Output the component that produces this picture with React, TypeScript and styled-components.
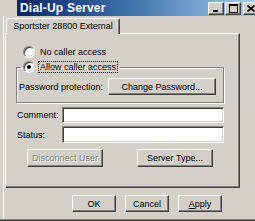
import React from "react";
import styled, { createGlobalStyle } from "styled-components";

const Global = createGlobalStyle`
  html, body { margin: 0; padding: 0; background: #d4d0c8; overflow: hidden; }
  * { box-sizing: border-box; }
`;

const FONT = `"Liberation Sans", Arial, sans-serif`;

const Window = styled.div`
  width: 255px;
  height: 221px;
  background: #d4d0c8;
  display: flex;
  flex-direction: column;
  overflow: hidden;
  font-family: ${FONT};
  font-size: 9px;
  color: #000;
  box-shadow: inset 0 -1px 0 #404040, inset 0 -2px 0 #808080, inset 3px 0 0 #d4d0c8, inset 4px 0 0 #fff;
`;

const TitleRow = styled.div`
  display: flex;
  height: 16px;
  flex-shrink: 0;
`;

const IconSlot = styled.div`
  width: 17px;
  background: #d4d0c8;
  box-shadow: inset 4px 0 0 #d4d0c8;
`;

const TitleBar = styled.div`
  flex: 1;
  display: flex;
  align-items: center;
  background: linear-gradient(90deg, #0a246a 0%, #3a6ea5 45%, #a6caf0 100%);
  padding-left: 3px;
`;

const TitleText = styled.span`
  color: #fff;
  font-weight: bold;
  font-size: 12px;
  flex: 1;
  letter-spacing: 0.2px;
`;

const CaptionButtons = styled.div`
  display: flex;
  gap: 1px;
  margin-right: -4px;
`;

const CaptionButton = styled.div<{ $gapLeft?: number }>`
  width: 16px;
  height: 13px;
  margin-left: ${(p) => p.$gapLeft ?? 0}px;
  background: #d4d0c8;
  border-top: 1px solid #fff;
  border-left: 1px solid #fff;
  border-right: 1px solid #404040;
  border-bottom: 1px solid #404040;
  box-shadow: inset -1px -1px 0 #808080;
  display: flex;
  align-items: center;
  justify-content: center;
  flex-shrink: 0;
`;

const Body = styled.div`
  display: flex;
  flex-direction: column;
  padding: 1px 15px 0 5px;
`;

const TabStrip = styled.div`
  height: 16px;
  display: flex;
  align-items: flex-end;
`;

const Tab = styled.div`
  margin-left: 1px;
  width: 114px;
  height: 16px;
  margin-bottom: -1px;
  background: #d4d0c8;
  border-top: 1px solid #fff;
  border-left: 1px solid #fff;
  border-right: 1px solid #404040;
  box-shadow: inset -1px 0 0 #808080;
  border-radius: 2px 2px 0 0;
  display: flex;
  align-items: center;
  justify-content: center;
  position: relative;
  z-index: 1;
  padding-bottom: 1px;
`;

const Panel = styled.div`
  height: 155px;
  border-top: 1px solid #fff;
  border-left: 1px solid #fff;
  border-right: 1px solid #404040;
  border-bottom: 1px solid #404040;
  box-shadow: inset -1px -1px 0 #808080;
  display: flex;
  flex-direction: column;
`;

const RadioRow = styled.label<{ $ml: number; $mt: number }>`
  display: flex;
  align-items: center;
  height: 12px;
  margin-left: ${(p) => p.$ml}px;
  margin-top: ${(p) => p.$mt}px;
  gap: 3px;
`;

const RadioCircle = styled.span<{ $checked?: boolean }>`
  width: 12px;
  height: 12px;
  border-radius: 50%;
  background: #fff;
  border: 1px solid;
  border-color: #808080 #fff #fff #808080;
  box-shadow: inset 1px 1px 0 #404040, inset -1px -1px 0 #d4d0c8;
  display: flex;
  align-items: center;
  justify-content: center;
  flex-shrink: 0;
  &::after {
    content: "";
    width: 4px;
    height: 4px;
    border-radius: 50%;
    background: ${(p) => (p.$checked ? "#000" : "transparent")};
  }
`;

const RadioText = styled.span<{ $focus?: boolean }>`
  border: 1px dotted ${(p) => (p.$focus ? "#000" : "transparent")};
  padding: 0 1px;
  line-height: 10px;
`;

const Group = styled.fieldset`
  margin: 3px 0 0 10px;
  width: 208px;
  padding: 0 7px 7px 2px;
  border: 1px solid #808080;
  box-shadow: inset 1px 1px 0 #fff, 1px 1px 0 #fff;
  min-width: 0;
`;

const Legend = styled.legend`
  margin-left: 2px;
  padding: 0 2px 0 2px;
  height: 12px;
  display: flex;
`;

const GroupRow = styled.div`
  display: flex;
  align-items: center;
  justify-content: space-between;
  margin-top: 5px;
`;

const Button = styled.button<{ $w: number }>`
  width: ${(p) => p.$w}px;
  height: 17px;
  padding: 0;
  font-family: ${FONT};
  font-size: 9px;
  color: #000;
  background: #d4d0c8;
  border-top: 1px solid #fff;
  border-left: 1px solid #fff;
  border-right: 1px solid #404040;
  border-bottom: 1px solid #404040;
  box-shadow: inset -1px -1px 0 #808080;
  border-radius: 0;
  flex-shrink: 0;
  &:disabled {
    color: #808080;
    text-shadow: 1px 1px 0 #fff;
  }
`;

const FieldRow = styled.div<{ $mt: number }>`
  display: flex;
  align-items: center;
  margin-top: ${(p) => p.$mt}px;
  padding-left: 11px;
`;

const FieldLabel = styled.span`
  width: 45px;
`;

const Input = styled.div<{ $h: number }>`
  width: 162px;
  height: ${(p) => p.$h}px;
  background: #fff;
  border-top: 1px solid #808080;
  border-left: 1px solid #808080;
  border-right: 1px solid #fff;
  border-bottom: 1px solid #fff;
  box-shadow: inset 1px 1px 0 #404040, inset -1px -1px 0 #d4d0c8;
`;

const ActionRow = styled.div`
  display: flex;
  margin-top: 6px;
  padding-left: 21px;
  gap: 34px;
  & > button { height: 18px; }
`;

const Footer = styled.div`
  display: flex;
  justify-content: flex-end;
  gap: 9px;
  padding-right: 18px;
  margin-top: 7px;
`;

export default function App() {
  return (
    <>
      <Global />
      <Window>
        <TitleRow>
          <IconSlot />
          <TitleBar>
            <TitleText>Dial-Up Server</TitleText>
            <CaptionButtons>
              <CaptionButton>
                <svg width="8" height="8" viewBox="0 0 8 8">
                  <rect x="1" y="6" width="5" height="2" fill="#000" />
                </svg>
              </CaptionButton>
              <CaptionButton>
                <svg width="9" height="9" viewBox="0 0 9 9">
                  <rect x="0.5" y="0.5" width="8" height="8" fill="none" stroke="#000" />
                  <rect x="0" y="0" width="9" height="2" fill="#000" />
                </svg>
              </CaptionButton>
              <CaptionButton $gapLeft={1}>
                <svg width="8" height="7" viewBox="0 0 8 7">
                  <path d="M0.5 0.5 L7.5 6.5 M7.5 0.5 L0.5 6.5" stroke="#000" strokeWidth="1.6" />
                </svg>
              </CaptionButton>
            </CaptionButtons>
          </TitleBar>
        </TitleRow>
        <Body>
          <TabStrip>
            <Tab>Sportster 28800 External</Tab>
          </TabStrip>
          <Panel>
            <RadioRow $ml={17} $mt={12}>
              <RadioCircle />
              <RadioText>No caller access</RadioText>
            </RadioRow>
            <Group>
              <Legend>
                <RadioRow $ml={0} $mt={0}>
                  <RadioCircle $checked />
                  <RadioText $focus>Allow caller access</RadioText>
                </RadioRow>
              </Legend>
              <GroupRow>
                <span>Password protection:</span>
                <Button $w={108}>Change Password...</Button>
              </GroupRow>
            </Group>
            <FieldRow $mt={4}>
              <FieldLabel>Comment:</FieldLabel>
              <Input $h={16} />
            </FieldRow>
            <FieldRow $mt={3}>
              <FieldLabel>Status:</FieldLabel>
              <Input $h={17} />
            </FieldRow>
            <ActionRow>
              <Button $w={76} disabled>
                Disconnect User
              </Button>
              <Button $w={76}>Server Type...</Button>
            </ActionRow>
          </Panel>
          <Footer>
            <Button $w={44}>OK</Button>
            <Button $w={44}>Cancel</Button>
            <Button $w={44}>
              <u>A</u>pply
            </Button>
          </Footer>
        </Body>
      </Window>
    </>
  );
}
